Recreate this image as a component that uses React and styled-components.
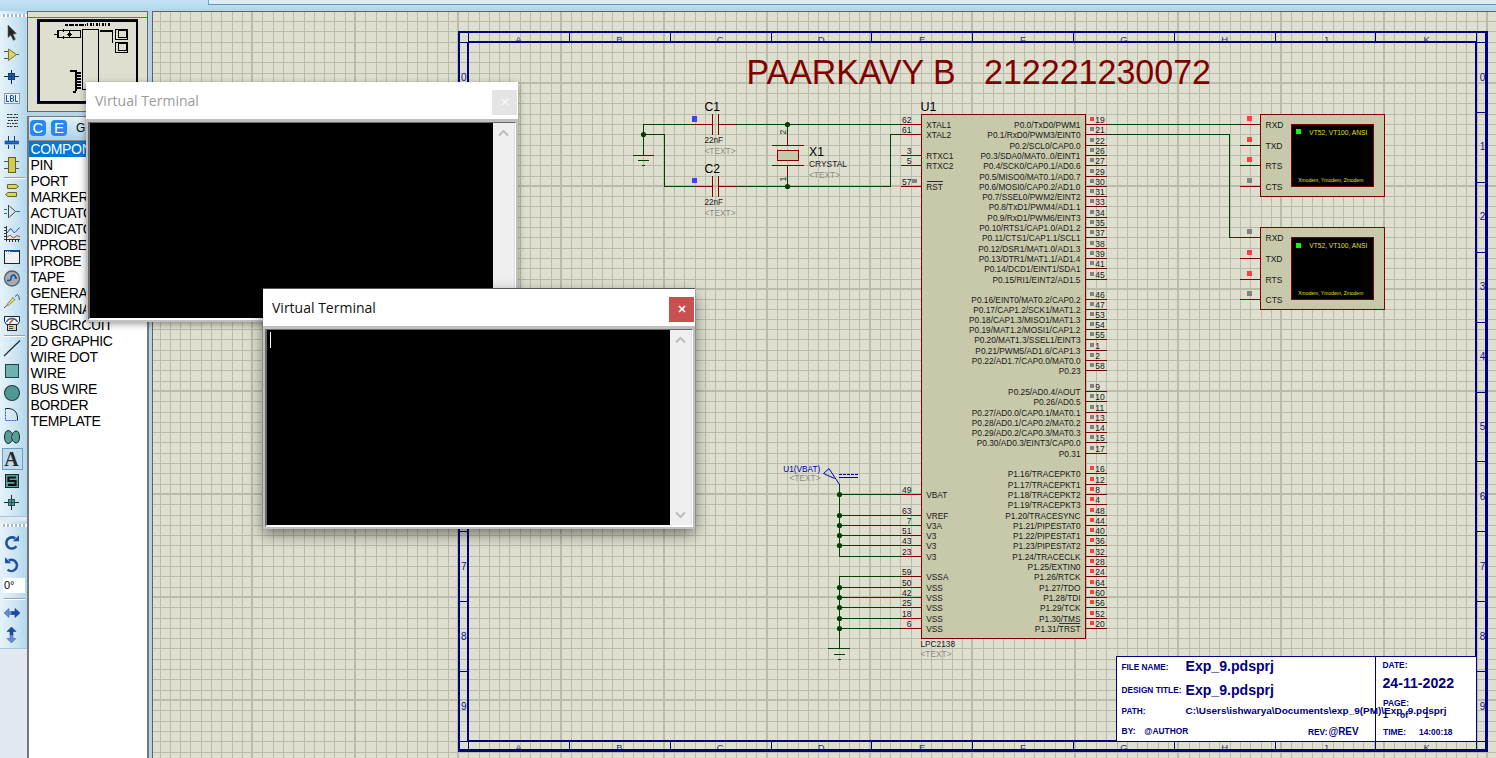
import React from "react";
import styled, { createGlobalStyle } from "styled-components";

const NAVY = "#000080";
const RED = "#800000";
const WIRE = "#004000";
const SANS = '"Liberation Sans", Arial, sans-serif';

const GlobalStyle = createGlobalStyle`
  html, body { margin: 0; padding: 0; overflow: hidden; }
  body { font-family: ${SANS}; background: #e3eaf1; }
  * { box-sizing: border-box; }
`;

/* ---------- shell ---------- */

const Shell = styled.div`
  position: relative;
  display: flex;
  flex-direction: column;
  width: 1496px;
  height: 758px;
  overflow: hidden;
  background: #b4d5e8;
`;

const TopBar = styled.div`
  flex: none;
  height: 11px;
  padding-left: 208px;
  background: linear-gradient(#c4e2f3, #b2d6ea);
`;

const TopField = styled.div`
  height: 5px;
  background: #e0eaf1;
  border-left: 1px solid #6fa6c4;
  border-bottom: 1px solid #6098b8;
`;

const Body = styled.div`
  flex: 1;
  display: flex;
  min-height: 0;
`;

/* ---------- tool column ---------- */

const ToolColumn = styled.div`
  flex: none;
  width: 27px;
  background: #e1e8ef;
`;

const ToolStrip = styled.div`
  height: ${(p) => p.$height}px;
  margin-bottom: 4px;
  display: flex;
  flex-direction: column;
  background: linear-gradient(90deg, #e4f2fa 0%, #d3e8f4 45%, #b2d7ed 100%);
  border-bottom: 1px solid #a3c9df;
`;

const Grip = styled.div`
  flex: none;
  height: 3px;
  margin: ${(p) => p.$top}px 0 ${(p) => p.$bottom}px 1px;
  background: repeating-linear-gradient(90deg, #fff 0 2px, #a9b7c1 2px 4px);
`;

const ToolCell = styled.div`
  flex: none;
  width: 24px;
  height: 22px;
  svg { display: block; }
`;

const ActiveCell = styled(ToolCell)`
  width: 21px;
  margin-left: 2px;
  background: #bfdced;
  border: 1px solid #6a9fbd;
  svg { margin: -1px 0 0 -3px; }
`;

const Separator = styled.div`
  flex: none;
  height: 2px;
  margin: ${(p) => p.$top}px 2px ${(p) => p.$bottom}px 4px;
  background: #fff;
  border-top: 1px solid #a0a0a0;
`;

const AngleField = styled.div`
  flex: none;
  width: 22px;
  height: 15px;
  margin: 2px 0 5px 3px;
  padding-left: 1px;
  background: #fff;
  font-size: 11px;
  line-height: 14px;
  color: #000;
`;

const line = (d, stroke = "#333", w = 1, extra = {}) => (
  <path d={d} stroke={stroke} strokeWidth={w} fill="none" {...extra} />
);

const icons = {
  pointer: <path d="M8 3 L8 15.5 L10.8 13.2 L13.4 18.4 L15.4 17.3 L13 12.3 L16.4 11.6 Z" fill="#262626" stroke="#5d6770" strokeWidth=".6" />,
  component: (
    <>
      {line("M4 7.5H9M4 14.5H9M16 10.5H19", "#555")}
      <path d="M8.5 5 L16.5 10.5 L8.5 16.500 Z" fill="#dcd55e" stroke="#77752a" />
    </>
  ),
  junction: (
    <>
      {line("M4 10.500H19M11.5 4V18", "#1b2530")}
      <rect x="8.500" y="7.5" width="6" height="6" fill="#1565b4" stroke="#0c3f7a" />
      {line("M9 10.500H14M11.5 8V13", "#0c3f7a")}
    </>
  ),
  label: (
    <>
      <rect x="4.5" y="5.5" width="15" height="10" fill="#e4f1fa" stroke="#444" strokeDasharray="1 1" />
      <path d="M6.500 7V13.500H9M10.500 7.500V13.500H12.500Q13.500 13.500 13.500 12T12.500 10.500H10.500M12.500 10.500Q13.500 10.500 13.500 9T12.500 7.500H10.500M15.500 7V13.500H18" fill="none" stroke="#0a50a8" />
    </>
  ),
  script: line("M7 4.5H13M14 4.5H18M7 7.5H18M8 10.5H13M14 10.5H18M7 13.5H11M12 13.5H18M7 16.5H13M14 16.5H18", "#333", 1, { strokeDasharray: "2.4 .6" }),
  bus: (
    <>
      {line("M8.500 4V9M14.5 4V9M8.500 13V17M14.5 13V17", "#123f80")}
      <rect x="5" y="9" width="13.5" height="3" fill="#1c6bc0" stroke="#0d4080" strokeWidth=".6" />
    </>
  ),
  subcircuit: (
    <>
      {line("M4 7.5H9M4 14.5H9M15 7.5H19M15 14.5H19", "#555")}
      <rect x="8.5" y="3.5" width="7" height="15" fill="#d3cb50" stroke="#626021" />
    </>
  ),
  ports: (
    <>
      <path d="M7.5 5.5H16L18.5 7.500L16 9.500H7.5Z" fill="#dcd55e" stroke="#66632a" />
      <path d="M16.5 13.5H8L5.5 15.500L8 17.5H16.5Z" fill="#dcd55e" stroke="#66632a" />
    </>
  ),
  pin: (
    <>
      {line("M4 8.5H7M4 12.5H7M16 10.500H20", "#14807c")}
      {line("M8.5 4V17M9.5 5.2L15.500 10.500L9.5 16", "#3c4650")}
    </>
  ),
  graph: (
    <>
      {line("M6.5 3V18.5M4 16.500H20M4 4.5H6M4 7.5H6M4 10.5H6M4 13.5H6M9.5 17V19M12.5 17V19M15.5 17V19M18.5 17V19", "#333")}
      {line("M7 10L10 6Q11.5 5 12.5 7.5T15 9.5L19.5 4.5", "#1a5ab4")}
      {line("M7 14L9.5 12.5Q11 12 12 14T15 14L17 12.5L20 14", "#d04010")}
    </>
  ),
  tape: (
    <>
      <rect x="4.5" y="5.5" width="15" height="13" fill="#f0f0f4" stroke="#222" />
      <rect x="5" y="5" width="14" height="2" fill="#174c9d" />
      {line("M5 6.5H11", "#cde", 1, { strokeDasharray: "1 1" })}
    </>
  ),
  generator: (
    <>
      <circle cx="12" cy="11.500" r="7.5" fill="#a6acb2" stroke="#596069" strokeWidth="1.3" />
      {line("M7 13.500H9Q11 13.500 11 11T13.5 8Q15.500 8 15.500 11H17", "#0e4e9e", 1.4)}
    </>
  ),
  probe: (
    <>
      {line("M4 19L8 15.5M15 7.500L17.5 5.500Q19 6 19.5 11", "#4c5660", 1)}
      <path d="M7 15.500L13 8.500L15 10.500L8.5 16.500Z" fill="#e2df70" stroke="#74713a" strokeWidth=".8" />
    </>
  ),
  instrument: (
    <>
      <path d="M4.5 5.5H19.5V10.500L17.5 13.500H6.5L4.500 10.500Z" fill="#edf5fb" stroke="#222" />
      {line("M6.500 11Q8 7.500 12 7.500T17.500 11", "#2563ad", 1.4)}
      {line("M9.500 12.500L14 7.500", "#d04010", 1.200)}
      <rect x="7.5" y="13.5" width="9" height="6" fill="#d8d8d0" stroke="#222" />
      {line("M9 15.5H13M9 17.500H15", "#444")}
      <rect x="13" y="16" width="2" height="2" fill="#dfcc22" />
    </>
  ),
  lineTool: line("M4 18L20 2.500", "#282828", 1.2),
  box: <rect x="5.5" y="4.5" width="13" height="13" fill="#6fb2ad" stroke="#26403f" />,
  circle: <circle cx="12" cy="11" r="7.5" fill="#4f9995" stroke="#26403f" strokeWidth="1.1" />,
  arc: (
    <>
      {line("M5.5 4.5V16.5H18", "#1a5ab4", 1, { strokeDasharray: "2 1" })}
      {line("M5.5 4.5H9Q17.5 5.5 17.5 14V16", "#222")}
    </>
  ),
  path: (
    <path d="M8.2 4.5C11 4.5 11 7.5 12.4 7.5S13.5 5 16.2 5C20.6 5 20.6 17 16.2 17C13.5 17 13.8 14.5 12.4 14.5S11 17.5 8.2 17.5C3.3 17.5 3.3 4.5 8.2 4.5ZM12.4 7.5Q10.9 11 12.4 14.5" fill="#55a09b" stroke="#222" />
  ),
  text: <text x="11.600" y="18" textAnchor="middle" fontFamily='"Liberation Serif", serif' fontWeight="700" fontSize="20" fill="#2a2a2a">A</text>,
  symbol: (
    <>
      <rect x="5.5" y="4.5" width="13" height="13" fill="#58a39f" stroke="#1c2a2a" />
      {line("M16 7.5H8.5V11H15.5V14.8H8", "#111", 2.2)}
    </>
  ),
  marker: (
    <>
      {line("M4 10.500H19M11.5 3V18", "#222")}
      <rect x="8.5" y="7.500" width="6" height="6" fill="#4d9a96" stroke="#27504e" />
      {line("M9 10.500H14M11.5 8V13", "#27504e")}
    </>
  ),
  rotateCw: (
    <>
      {line("M16.4 14.3A5.6 5.6 0 1 1 15.2 6.4", "#2450a0", 2.6)}
      <path d="M12.8 9.3H19V3.2Z" fill="#2450a0" />
    </>
  ),
  rotateCcw: (
    <>
      {line("M7.6 15.6A5.6 5.6 0 1 0 8.8 6.4", "#2450a0", 2.6)}
      <path d="M11.2 9.3H5V3.2Z" fill="#2450a0" />
    </>
  ),
  flipH: (
    <>
      <path d="M4 11L9 6.5V9.5H12V12.5H9V15.5Z" fill="#6689d0" stroke="#4768b4" strokeWidth=".6" />
      <path d="M20 11L15 6.5V9.5H12V12.5H15V15.5Z" fill="#174ba8" stroke="#163a7d" strokeWidth=".6" />
    </>
  ),
  flipV: (
    <>
      <path d="M11.5 3L16 7.500H13V11H10V7.500H7Z" fill="#174ba8" stroke="#163a7d" strokeWidth=".6" />
      <path d="M11.5 19L16 14.500H13V11H10V14.500H7Z" fill="#6689d0" stroke="#4768b4" strokeWidth=".6" />
    </>
  ),
};

const Tool = ({ name, active }) => {
  const Cell = active ? ActiveCell : ToolCell;
  return (
    <Cell>
      <svg width="24" height="22" viewBox="0 0 24 22">{icons[name]}</svg>
    </Cell>
  );
};

/* ---------- side panel ---------- */

const SidePanel = styled.div`
  flex: none;
  width: 122px;
  margin-right: 3px;
  display: flex;
  flex-direction: column;
  gap: 4px;
`;

const Overview = styled.div`
  flex: none;
  width: 121px;
  height: 101px;
  background: #dfdfcf;
  border: 1px solid #69696b;
  svg { display: block; }
`;

const ObjectPanel = styled.div`
  flex: 1;
  background: #fff;
  border: 2px solid #77777a;
  border-top-width: 1px;
  border-bottom: 0;
`;

const PanelHeader = styled.div`
  display: flex;
  align-items: center;
  gap: 5px;
  height: 24px;
  padding: 0 0 1px 1px;
  background: linear-gradient(#e2f0f8, #aed2e7);
  border-bottom: 1px solid #8b8b8b;
`;

const HeaderButton = styled.span`
  width: 16px;
  height: 16px;
  border-radius: 4px;
  background: #2688f0;
  color: #fff;
  font: 15px/16px ${SANS};
  text-align: center;
`;

const HeaderTitle = styled.span`
  margin-left: 4px;
  font-size: 12px;
`;

const ObjectRow = styled.div`
  height: 16px;
  padding-left: 1.5px;
  font-size: 14px;
  line-height: 17px;
  letter-spacing: -0.35px;
  white-space: nowrap;
  color: ${(p) => (p.$selected ? "#fff" : "#000")};
  background: ${(p) => (p.$selected ? "#0078d7" : "transparent")};
`;

const objects = [
  "COMPONENT", "PIN", "PORT", "MARKER", "ACTUATOR", "INDICATOR", "VPROBE", "IPROBE", "TAPE",
  "GENERATOR", "TERMINAL", "SUBCIRCUIT", "2D GRAPHIC", "WIRE DOT", "WIRE", "BUS WIRE", "BORDER", "TEMPLATE",
];

const OverviewMap = () => (
  <svg width="119" height="99" viewBox="28 12 119 99" shapeRendering="crispEdges">
    <path d="M28 17.5H148" stroke="#00b800" />
    <rect x="37.5" y="19.5" width="100" height="84" fill="none" stroke="#0000b0" />
    <rect x="39" y="21" width="97.500" height="81" fill="none" stroke="#000" strokeWidth="2" />
    <path d="M65 24.500H86" stroke="#000" strokeWidth="2" strokeDasharray="3 1 5 1" />
    <path d="M87 24.500H110" stroke="#000" strokeWidth="3" strokeDasharray="1 2 2 1" />
    <path d="M57 30.500H80V37.500H57ZM54 34.500H57M63 29V32M63 36V39M69 31V37M67 34.500H72" fill="none" stroke="#000" />
    <path d="M57 31H58.500V37H57ZM68 33H71V36H68Z" fill="#000" />
    <path d="M82.500 29.500H98.500V89.500H82.500Z" fill="none" stroke="#000" />
    <path d="M100 31H112.500V43" fill="none" stroke="#000" strokeWidth="1.500" />
    {[29.5, 42.5].map((y) => (
      <g key={y} fill="none" stroke="#000">
        <rect x="115.500" y={y} width="12" height="10" />
        <rect x="118.500" y={y + 1} width="8" height="7" />
      </g>
    ))}
    <path d="M70 70.500H77M75.500 71V91" stroke="#000" strokeWidth="2" />
    <path d="M78 72V89" stroke="#000" strokeWidth="6" strokeDasharray="2 1" />
    <path d="M73 91.500H76" stroke="#000" strokeWidth="2" />
  </svg>
);

/* ---------- schematic ---------- */

const Canvas = styled.div`
  flex: 1;
  min-width: 0;
  svg { display: block; }
`;

const gridX = Array.from({ length: 132 }, (_, i) => {
  const k = i - 29;
  return { at: Math.round(457.95 + 10.29 * k), major: k % 10 === 0 };
}).filter((g) => g.at > 153);

const gridRows = [
  21, 31, 42, 52, 62, 73, 83, 93, 103, 114, 124, 134, 145, 155, 165, 176, 186, 196, 206, 217, 227, 237, 248, 258,
  268, 279, 289, 299, 309, 319, 329, 339, 350, 360, 370, 381, 391, 401, 412, 422, 432, 442, 453, 463, 473, 484, 494,
  504, 515, 525, 535, 545, 556, 566, 576, 587, 597, 607, 618, 628, 638, 648, 659, 669, 679, 690, 700, 710, 721, 731,
  741, 752,
];

const Grid = () => (
  <g fill="#bbbbac">
    {gridX.map((g) => (
      <rect key={g.at} x={g.major ? g.at - 1 : g.at} y="12" width={g.major ? 2 : 1} height="746" />
    ))}
    {gridRows.map((y, i) => (
      <rect key={y} x="153" y={i % 10 === 6 ? y - 1 : y} width="1343" height={i % 10 === 6 ? 2 : 1} />
    ))}
  </g>
);

const Label = ({ x, y, w, size = 8.6, fill = "#181818", bold, anchor, children }) => (
  <text
    x={x}
    y={y}
    fontSize={size}
    fill={fill}
    fontWeight={bold ? 700 : 400}
    textAnchor={anchor}
    textLength={w}
    lengthAdjust="spacingAndGlyphs"
    xmlSpace="preserve"
  >
    {children}
  </text>
);

const Stub = ({ d, color = WIRE, w = 1 }) => (
  <path d={d} stroke={color} strokeWidth={w} fill="none" shapeRendering="crispEdges" />
);

const Dot = ({ x, y }) => <circle cx={x + 0.5} cy={y + 0.5} r="2.6" fill={WIRE} />;

const Frame = () => {
  const cols = "ABCDEFGHJK".split("");
  return (
    <>
      {cols.map((c, i) => (
        <g key={c} opacity=".8">
          <Label x={518.5 + i * 100.9} y={42.5} size={9.5} fill={NAVY} anchor="middle">{c}</Label>
          <Label x={518.5 + i * 100.9} y={751} size={9.5} fill={NAVY} anchor="middle">{c}</Label>
        </g>
      ))}
      {Array.from({ length: 10 }, (_, i) => (
        <g key={i} opacity=".9">
          <Label x={463.800} y={80.500 + i * 69.9} size={10} fill={NAVY} anchor="middle">{i}</Label>
          <Label x={1482.5} y={80.500 + i * 69.9} size={10} fill={NAVY} anchor="middle">{i}</Label>
        </g>
      ))}
      <g fill={NAVY} shapeRendering="crispEdges">
        <rect x="458" y="31" width="2" height="721" />
        <rect x="458" y="31" width="1030" height="2" />
        <rect x="1485" y="31" width="3" height="721" />
        <rect x="458" y="749" width="1030" height="3" />
        <rect x="467" y="42" width="2" height="700" />
        <rect x="468" y="41" width="1009" height="2" />
        <rect x="1475" y="41" width="2" height="700" />
        <rect x="468" y="740" width="1009" height="2" />
        <rect x="468" y="32" width="1" height="10" />
        <rect x="468" y="741" width="1" height="9" />
        <rect x="1476" y="32" width="1" height="10" />
        <rect x="1476" y="741" width="1" height="9" />
        {cols.slice(1).map((c, i) => (
          <React.Fragment key={c}>
            <rect x={Math.round(569 + i * 100.8)} y="32" width="1" height="10" />
            <rect x={Math.round(569 + i * 100.8)} y="741" width="1" height="9" />
          </React.Fragment>
        ))}
        {Array.from({ length: 11 }, (_, i) => (
          <React.Fragment key={i}>
            <rect x="459" y={Math.round(42 + i * 69.9)} width="9" height="1" />
            <rect x="1476" y={Math.round(42 + i * 69.9)} width="10" height="1" />
          </React.Fragment>
        ))}
      </g>
    </>
  );
};

const Capacitor = ({ name, y }) => (
  <>
    <rect x="692" y={y - 8} width="5" height={y === 124 ? 6 : 5} fill="#4040ff" />
    <Stub color={RED} d={`M695 ${y + 0.5}H712.5M718.5 ${y + 0.5}H737M712.5 ${y - 10}V${y + 11}M718.5 ${y - 10}V${y + 11}`} />
    <Label x={704.5} y={y - 13} w={15.500} size={12.500} fill="#000">{name}</Label>
    <Label x={704.5} y={y + 19} w={18.5}>22nF</Label>
    <Label x={704.5} y={y + 29.500} w={31} fill="#8c8c84">{"<TEXT>"}</Label>
  </>
);

const leftPins = [
  [62, "XTAL1", 124], [61, "XTAL2", 134], [3, "RTXC1", 155], [5, "RTXC2", 165], [57, "RST", 186],
  [49, "VBAT", 494], [63, "VREF", 515], [7, "V3A", 525], [51, "V3", 535], [43, "V3", 545], [23, "V3", 556],
  [59, "VSSA", 576], [50, "VSS", 587], [42, "VSS", 597], [25, "VSS", 607], [18, "VSS", 618], [6, "VSS", 628],
];

const rightPins = [
  [19, "P0.0/TxD0/PWM1", 124], [21, "P0.1/RxD0/PWM3/EINT0", 134], [22, "P0.2/SCL0/CAP0.0", 145],
  [26, "P0.3/SDA0/MAT0..0/EINT1", 155], [27, "P0.4/SCK0/CAP0.1/AD0.6", 165], [29, "P0.5/MISO0/MAT0.1/AD0.7", 176],
  [30, "P0.6/MOSI0/CAP0.2/AD1.0", 186], [31, "P0.7/SSEL0/PWM2/EINT2", 196], [33, "P0.8/TxD1/PWM4/AD1.1", 206],
  [34, "P0.9/RxD1/PWM6/EINT3", 217], [35, "P0.10/RTS1/CAP1.0/AD1.2", 227], [37, "P0.11/CTS1/CAP1.1/SCL1", 237],
  [38, "P0.12/DSR1/MAT1.0/AD1.3", 248], [39, "P0.13/DTR1/MAT1.1/AD1.4", 258], [41, "P0.14/DCD1/EINT1/SDA1", 268],
  [45, "P0.15/RI1/EINT2/AD1.5", 279], [46, "P0.16/EINT0/MAT0.2/CAP0.2", 299], [47, "P0.17/CAP1.2/SCK1/MAT1.2", 309],
  [53, "P0.18/CAP1.3/MISO1/MAT1.3", 319], [54, "P0.19/MAT1.2/MOSI1/CAP1.2", 329], [55, "P0.20/MAT1.3/SSEL1/EINT3", 339],
  [1, "P0.21/PWM5/AD1.6/CAP1.3", 350], [2, "P0.22/AD1.7/CAP0.0/MAT0.0", 360], [58, "P0.23", 370],
  [9, "P0.25/AD0.4/AOUT", 391], [10, "P0.26/AD0.5", 401], [11, "P0.27/AD0.0/CAP0.1/MAT0.1", 412],
  [13, "P0.28/AD0.1/CAP0.2/MAT0.2", 422], [14, "P0.29/AD0.2/CAP0.3/MAT0.3", 432], [15, "P0.30/AD0.3/EINT3/CAP0.0", 442],
  [17, "P0.31", 453], [16, "P1.16/TRACEPKT0", 473], [12, "P1.17/TRACEPKT1", 484], [8, "P1.18/TRACEPKT2", 494],
  [4, "P1.19/TRACEPKT3", 504], [48, "P1.20/TRACESYNC", 515], [44, "P1.21/PIPESTAT0", 525], [40, "P1.22/PIPESTAT1", 535],
  [36, "P1.23/PIPESTAT2", 545], [32, "P1.24/TRACECLK", 556], [28, "P1.25/EXTIN0", 566], [24, "P1.26/RTCK", 576],
  [64, "P1.27/TDO", 587], [60, "P1.28/TDI", 597], [56, "P1.29/TCK", 607], [52, "P1.30/TMS", 618], [20, "P1.31/TRST", 628],
];

const Chip = () => (
  <>
    <rect x="921.5" y="114.5" width="164" height="524" fill="#c8c8aa" stroke={RED} />
    <Label x={920.5} y={111} w={16} size={12.500} fill="#000">U1</Label>
    <Label x={920.5} y={647} w={34.500}>LPC2138</Label>
    <Label x={920.5} y={657} w={31} fill="#8c8c84">{"<TEXT>"}</Label>
    {leftPins.map(([no, name, y]) => (
      <React.Fragment key={no}>
        <Stub color={RED} d={`M901 ${y + 0.5}H921`} />
        <Label x={911.5} y={y - 1} size={8.500} anchor="end">{no}</Label>
        <Label x={926.3} y={y + 4} size={8.300}>{name}</Label>
      </React.Fragment>
    ))}
    {rightPins.map(([no, name, y]) => (
      <React.Fragment key={no}>
        <Stub color={RED} d={`M1086 ${y + 0.5}H1107`} />
        <rect x="1090" y={y - 7} width="4" height="4" fill={no === 19 || y > 460 ? "#ff4040" : "#828282"} />
        <Label x={1095.3} y={y - 1} size={8.500}>{no}</Label>
        <Label x={1080.5} y={y + 4} size={8.300} anchor="end">{name}</Label>
      </React.Fragment>
    ))}
    <rect x="912" y="179" width="5" height="4" fill="#828282" />
    <Stub color="#303030" d="M926.500 181.500H943M1059 623.500H1080" />
  </>
);

const Terminal = ({ y, pins }) => (
  <>
    <rect x="1260.5" y={y + 0.5} width="124" height="82" fill="#c8c8aa" stroke={RED} />
    <rect x="1291.5" y={y + 10.5} width="82" height="62" fill="#000" stroke={RED} />
    <rect x="1296" y={y + (y === 114 ? 15 : 16)} width="5" height="5" fill="#00ff00" />
    <Label x={1309.3} y={y + 21.3} w={58} size={7.500} fill="#e0e000">VT52, VT100, ANSI</Label>
    <Label x={1298.3} y={y + 68} w={65} size={5.6} fill="#e0e000">Xmodem, Ymodem, Zmodem</Label>
    {pins.map(([name, py, color]) => (
      <React.Fragment key={name}>
        <Stub color={RED} d={`M1240 ${py + 0.5}H1260`} />
        <rect x="1247" y={py - 8} width="5" height="5" fill={color} />
        <Label x={1265.5} y={py + 4} size={8.500}>{name}</Label>
      </React.Fragment>
    ))}
  </>
);

const TitleBlock = () => {
  const T = (p) => <Label bold fill={NAVY} {...p} />;
  return (
    <>
      <rect x="1116.5" y="656.5" width="360" height="85" fill="#fff" stroke={NAVY} />
      <Stub color={NAVY} d="M1375.500 656V750" />
      <T x={1121.500} y={670} w={47}>FILE NAME:</T>
      <T x={1185.500} y={671} w={88.500} size={14}>Exp_9.pdsprj</T>
      <T x={1121.500} y={693} w={60}>DESIGN TITLE:</T>
      <T x={1185.500} y={695} w={88.500} size={14}>Exp_9.pdsprj</T>
      <T x={1121.500} y={714} w={24}>PATH:</T>
      <T x={1185.500} y={714} w={261} size={9.500}>{"C:\\Users\\ishwarya\\Documents\\exp_9(PM)\\Exp_9.pdsprj"}</T>
      <T x={1121.500} y={734} w={14}>BY:</T>
      <T x={1144.300} y={734} w={44} size={9}>@AUTHOR</T>
      <T x={1308} y={735} w={19.500}>REV:</T>
      <T x={1328.500} y={735} w={30} size={10}>@REV</T>
      <T x={1382.500} y={668} w={25}>DATE:</T>
      <T x={1382.500} y={688} w={71.500} size={14}>24-11-2022</T>
      <T x={1383} y={706} w={26}>PAGE:</T>
      <T x={1383} y={718} size={9}>1</T>
      <T x={1400} y={718} size={8.500}>of</T>
      <T x={1424} y={718} size={9}>1</T>
      <T x={1383} y={735} w={23}>TIME:</T>
      <T x={1419} y={735} w={33.500}>14:00:18</T>
    </>
  );
};

const Schematic = () => (
  <svg width="1344" height="747" viewBox="152 11 1344 747" fontFamily={SANS}>
    <rect x="152" y="11" width="1344" height="747" fill="#dfdfcf" />
    <Grid />
    <path d="M152 11.500H1496M152.500 11V758" stroke="#626262" />
    <Frame />
    <Label x={746.500} y={84} w={209} size={35.500} fill={RED}>PAARKAVY B</Label>
    <Label x={984} y={84} w={227} size={35.500} fill={RED}>212221230072</Label>

    <Stub d="M695 124.500H643.500V155M643 134.500H664.500V186.500H695M633 155.500H654M638 160.500H649M642 165.500H645" />
    <Stub d="M737 124.500H901M737 186.500H890.500V134.500H901M787.500 124V134M787.500 176V187" />
    <Dot x={643} y={134} />
    <Dot x={787} y={124} />
    <Dot x={787} y={186} />
    <Capacitor name="C1" y={124} />
    <Capacitor name="C2" y={186} />

    <Stub color={RED} d="M787.500 134V145M772 145.500H804M772 165.500H804M787.500 165V176" />
    <rect x="777.5" y="150.5" width="21" height="10" fill="#c8c8aa" stroke={RED} />
    <text transform="translate(786 134.500) rotate(-90)" fontSize="8.500" fill="#181818">2</text>
    <text transform="translate(786 181.500) rotate(-90)" fontSize="8.500" fill="#181818">1</text>
    <Label x={809} y={156} w={15} size={12.500} fill="#000">X1</Label>
    <Label x={809} y={167} w={38}>CRYSTAL</Label>
    <Label x={809} y={178} w={31} fill="#8c8c84">{"<TEXT>"}</Label>

    <Chip />

    <Stub d="M839.500 484V556.500H901M839 494.500H901M839 515.500H901M839 525.500H901M839 535.500H901M839 545.500H901" />
    <Stub d="M901 576.500H839.500V648M839 587.500H901M839 597.500H901M839 607.500H901M839 618.500H901M839 628.500H901M828 648.500H850M834 654.500H845M838 659.500H841" />
    {[494, 515, 525, 535, 545, 587, 597, 607, 618, 628].map((y) => <Dot key={y} x={839} y={y} />)}
    <Label x={783.300} y={472} w={37} fill="#0000b0">U1(VBAT)</Label>
    <Label x={789.500} y={481} w={31} fill="#8c8c84">{"<TEXT>"}</Label>
    <path d="M839.500 484.500L834.500 477L829 468.500L823.500 473.500L834.500 478.500" fill="none" stroke="#0000b0" />
    <Stub color="#0000b0" d="M839 477.500H858" />
    <path d="M839 474.500H858" stroke="#0000b0" strokeDasharray="3 1" shapeRendering="crispEdges" />

    <Stub d="M1107 124.500H1240M1107 134.500H1229.500V237.500H1240" />
    <Terminal y={114} pins={[["RXD", 124, "#ff4040"], ["TXD", 145, "#ff4040"], ["RTS", 165, "#ff4040"], ["CTS", 186, "#828282"]]} />
    <Terminal y={227} pins={[["RXD", 237, "#828282"], ["TXD", 258, "#ff4040"], ["RTS", 279, "#ff4040"], ["CTS", 299, "#828282"]]} />
    <TitleBlock />
  </svg>
);

/* ---------- terminal windows ---------- */

const Window = styled.section`
  position: absolute;
  left: ${(p) => p.$x}px;
  top: ${(p) => p.$y}px;
  width: 432px;
  height: 240px;
  display: flex;
  flex-direction: column;
  background: #c0c0c0;
  box-shadow: ${(p) => (p.$active
    ? "0 -1px 0 #555, 0 5px 14px rgba(0,0,0,.5)"
    : "0 2px 7px rgba(0,0,0,.4)")};
`;

const WindowTitle = styled.header`
  flex: none;
  display: flex;
  justify-content: space-between;
  height: 37px;
  padding: 8px 1px 0 9px;
  background: #fff;
  font: 14px/22px "Open Sans", "Noto Sans", sans-serif;
  color: ${(p) => (p.$active ? "#111" : "#9a9a9a")};
`;

const CloseButton = styled.span`
  display: flex;
  align-items: center;
  justify-content: center;
  width: 25px;
  height: 25px;
  padding-bottom: 1px;
  background: ${(p) => (p.$active ? "#c75050" : "#e4e4e4")};
`;

const Screen = styled.div`
  flex: 1;
  display: flex;
  margin: 3px 2px 2px;
  background: #000;
  border: 1px solid #696969;
  border-left-width: 2px;
  border-right: 1px solid #fff;
  border-bottom: 2px solid #fff;
`;

const Console = styled.div`
  flex: 1;
  padding: 2px 0 0 3px;
`;

const Caret = styled.div`
  width: 1px;
  height: 16px;
  background: #fff;
`;

const ScrollBar = styled.div`
  flex: none;
  width: 22px;
  padding: 6px 0 6px;
  display: flex;
  flex-direction: column;
  align-items: center;
  justify-content: space-between;
  background: #efefef;
  border-right: 1px solid #e0e0e0;
`;

const Chevron = ({ down }) => (
  <svg width="12" height="8" viewBox="0 0 12 8">
    <path d={down ? "M1 1.500L5.500 6L10 1.500" : "M1 6.500L5.500 2L10 6.500"} fill="none" stroke="#bdbdbd" strokeWidth="2" />
  </svg>
);

const VirtualTerminal = ({ x, y, active }) => (
  <Window $x={x} $y={y} $active={active}>
    <WindowTitle $active={active}>
      Virtual Terminal
      <CloseButton $active={active}>
        <svg width="8" height="8" viewBox="0 0 8 8">
          <path d="M1 1L7 7M7 1L1 7" stroke={active ? "#fff" : "#f6f6f6"} strokeWidth="1.700" />
        </svg>
      </CloseButton>
    </WindowTitle>
    <Screen>
      <Console>{active && <Caret />}</Console>
      <ScrollBar>
        <Chevron />
        <Chevron down />
      </ScrollBar>
    </Screen>
  </Window>
);

const groupA = ["pointer", "component", "junction", "label", "script", "bus", "subcircuit"];
const groupB = ["ports", "pin", "graph", "tape", "generator", "probe", "instrument"];
const groupC = ["lineTool", "box", "circle", "arc", "path", "text", "symbol", "marker"];

export default function App() {
  return (
    <Shell>
      <GlobalStyle />
      <TopBar><TopField /></TopBar>
      <Body>
        <ToolColumn>
          <ToolStrip $height={506}>
            <Grip $top={3} $bottom={5} />
            {groupA.map((n) => <Tool key={n} name={n} />)}
            <Separator $top={1} $bottom={0} />
            {groupB.map((n) => <Tool key={n} name={n} />)}
            <Separator $top={2} $bottom={1} />
            {groupC.map((n) => <Tool key={n} name={n} active={n === "text"} />)}
          </ToolStrip>
          <ToolStrip $height={128}>
            <Grip $top={3} $bottom={5} />
            <Tool name="rotateCw" />
            <Tool name="rotateCcw" />
            <AngleField>0°</AngleField>
            <Separator $top={0} $bottom={2} />
            <Tool name="flipH" />
            <Tool name="flipV" />
          </ToolStrip>
        </ToolColumn>
        <SidePanel>
          <Overview><OverviewMap /></Overview>
          <ObjectPanel>
            <PanelHeader>
              <HeaderButton>C</HeaderButton>
              <HeaderButton>E</HeaderButton>
              <HeaderTitle>G</HeaderTitle>
            </PanelHeader>
            {objects.map((o, i) => <ObjectRow key={o} $selected={i === 0}>{o}</ObjectRow>)}
          </ObjectPanel>
        </SidePanel>
        <Canvas><Schematic /></Canvas>
      </Body>
      <VirtualTerminal x={86} y={82} />
      <VirtualTerminal x={263} y={289} active />
    </Shell>
  );
}
